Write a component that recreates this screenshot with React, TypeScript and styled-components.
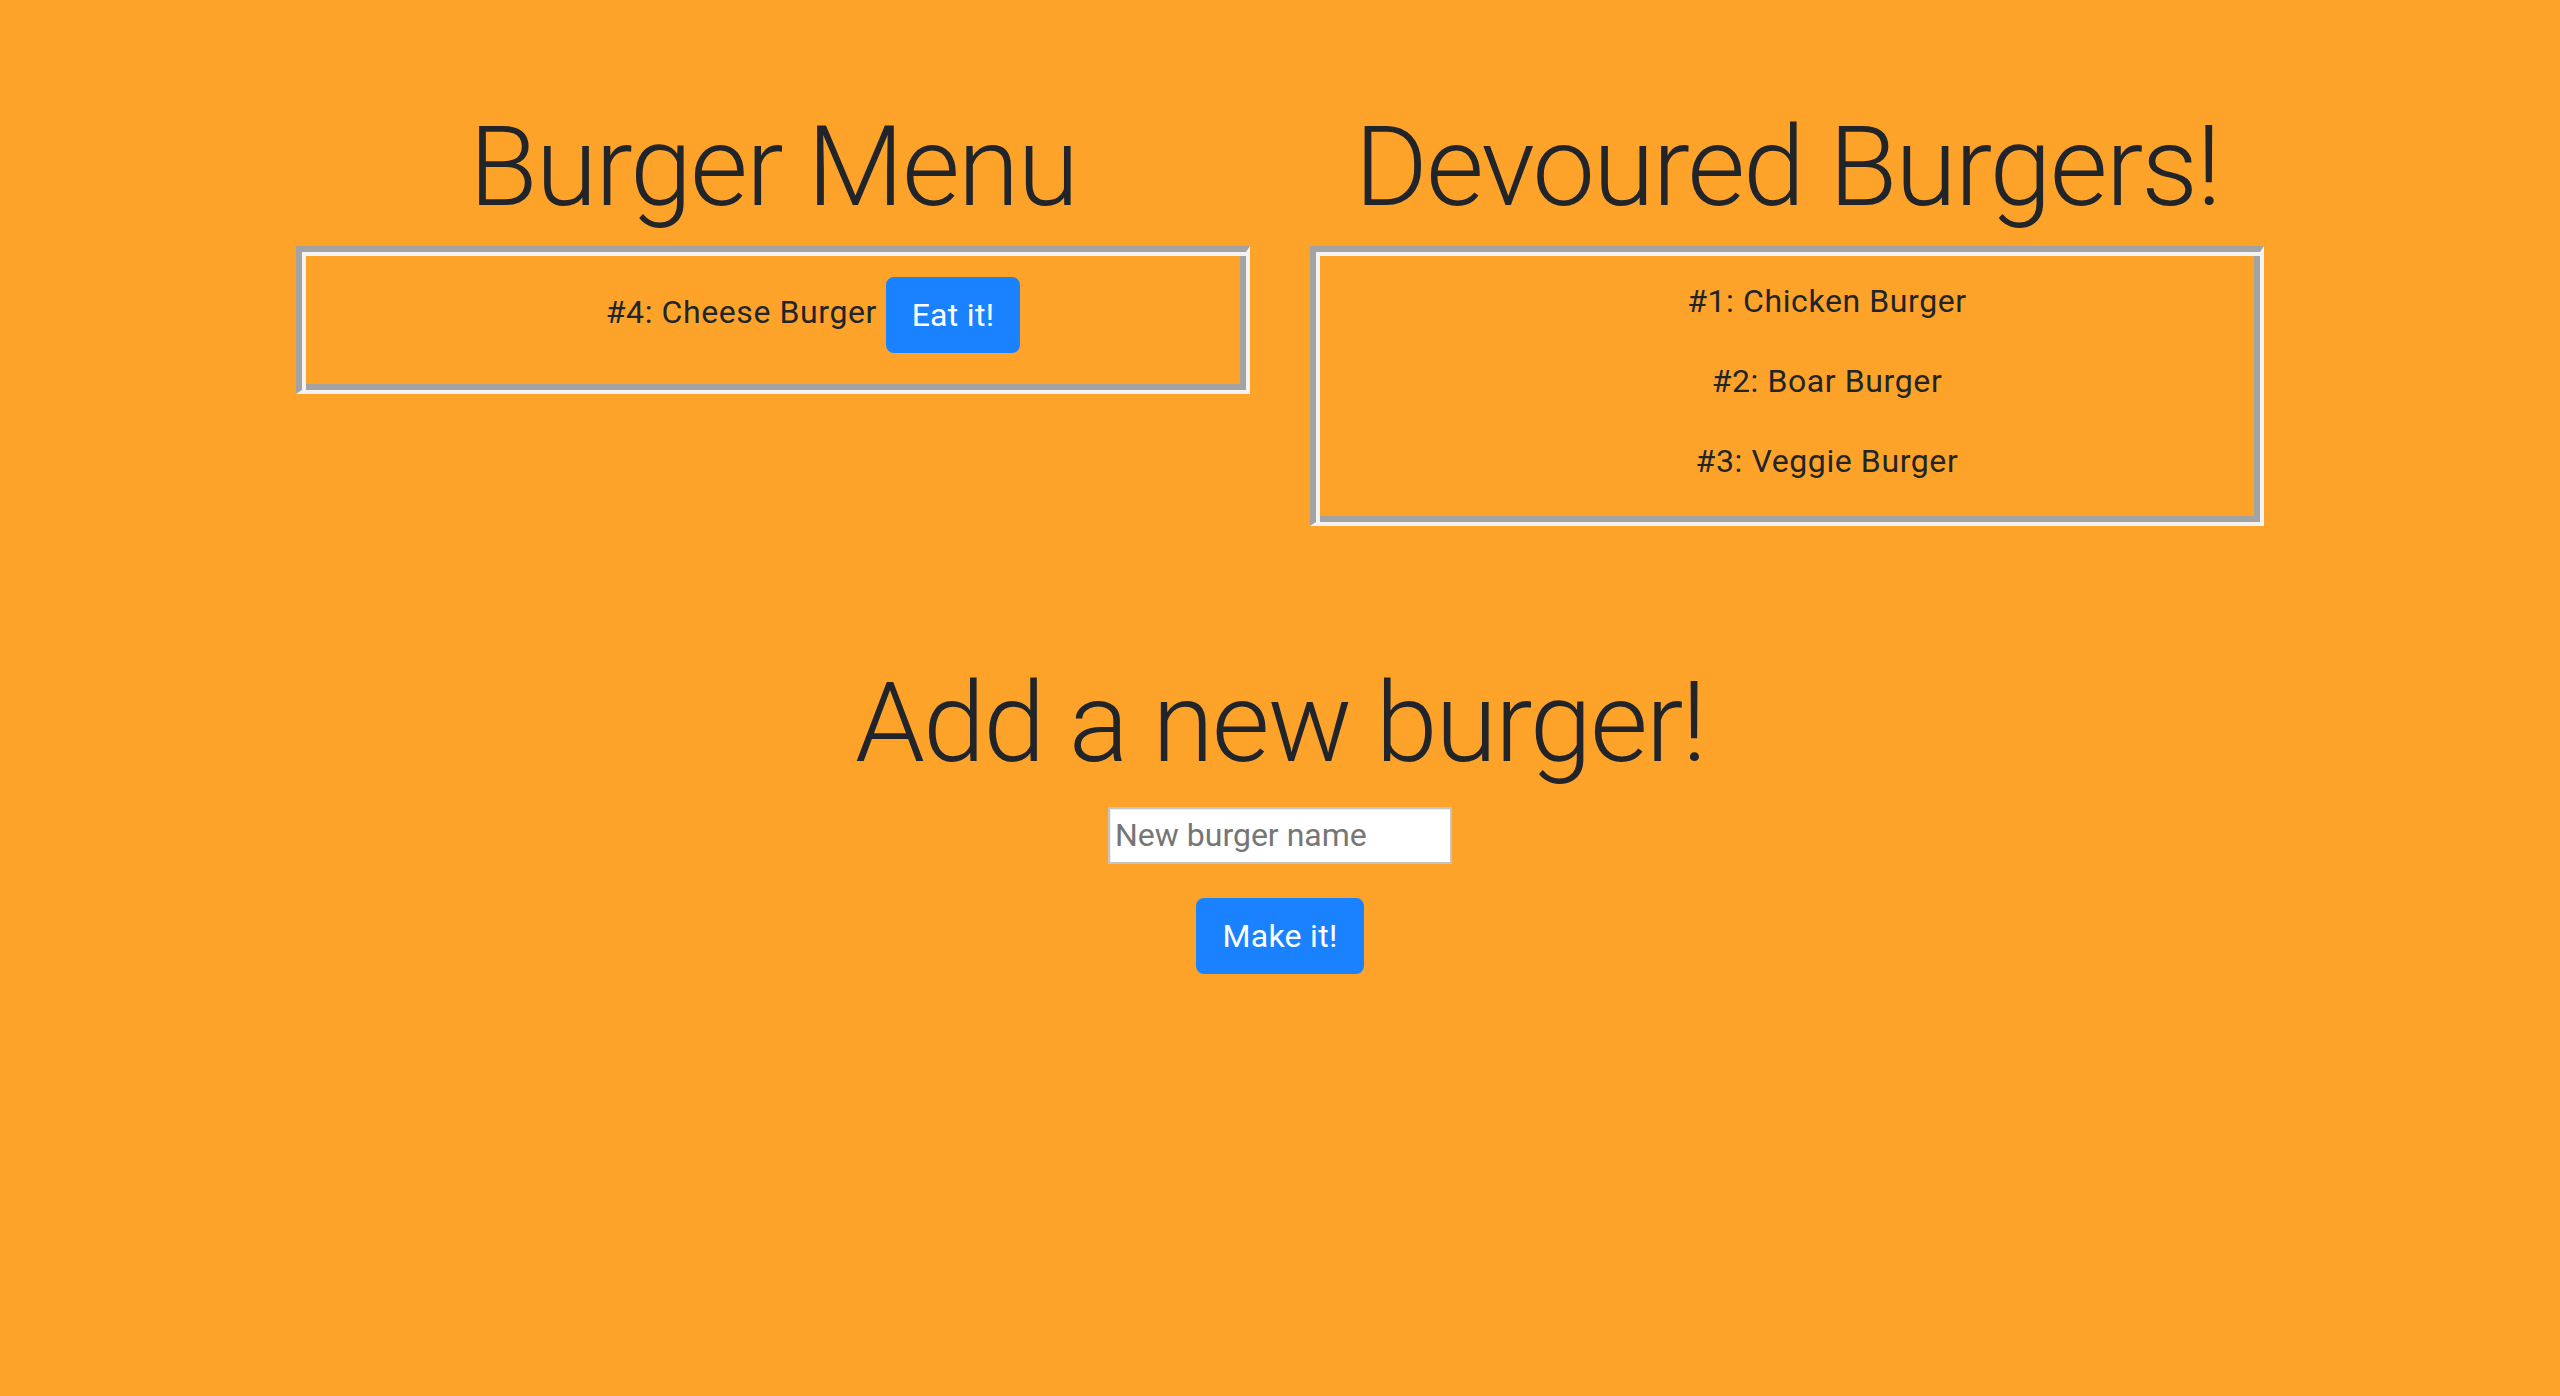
import React from "react";
import styled, { createGlobalStyle } from "styled-components";

const GlobalStyle = createGlobalStyle`
  html, body {
    margin: 0;
    padding: 0;
  }
  body {
    background: #fea32a;
    color: #212529;
    font-family: Roboto, "Noto Sans", "Liberation Sans", sans-serif;
    font-size: 32px;
    line-height: 1.5;
    letter-spacing: 0.6px;
  }
`;

const SPage = styled.div`
  min-height: 100vh;
  padding-top: 100px;
  box-sizing: border-box;
  display: flex;
  flex-direction: column;
  align-items: center;
`;

const SRow = styled.div`
  display: flex;
  justify-content: center;
  align-items: flex-start;
  gap: 60px;
`;

const SPanel = styled.div`
  width: 954px;
  display: flex;
  flex-direction: column;
`;

const SHeading = styled.h1`
  font-size: 112px;
  font-weight: 300;
  line-height: 1.2;
  letter-spacing: -2px;
  margin: 0 0 12px;
  text-align: center;
  white-space: nowrap;
`;

const SBox = styled.ul`
  list-style: none;
  margin: 0;
  border-style: solid;
  border-width: 6px 4px 4px 6px;
  border-color: #a3a3a3 #f3f3f3 #f3f3f3 #a3a3a3;
  box-shadow: inset 4px 4px 0 #f3f3f3, inset -6px -6px 0 #a3a3a3;
  padding: 25px 6px 5px 84px;
  text-align: center;
`;

const SItem = styled.li`
  margin: 0 0 32px;
`;

const SButton = styled.button`
  display: inline-block;
  font-family: inherit;
  font-size: 32px;
  line-height: 48px;
  letter-spacing: 0.3px;
  padding: 12px 24px;
  color: #fff;
  background: #1a82ff;
  border: 2px solid #1a82ff;
  border-radius: 8px;
  vertical-align: middle;
  cursor: pointer;
`;

const SForm = styled.div`
  margin-top: 130px;
  display: flex;
  flex-direction: column;
  align-items: center;
`;

const SInput = styled.input`
  width: 344px;
  height: 57px;
  box-sizing: border-box;
  font-family: inherit;
  font-size: 32px;
  padding: 0 5px;
  color: #212529;
  background: #fff;
  border: 2px solid #c4c4c4;
  box-shadow: inset 1px 1px 0 #ededed;
  outline: none;
  margin-top: 4px;
  margin-bottom: 34px;
  &::placeholder {
    color: #767676;
  }
`;

type Burger = { id: number; name: string };

const menu: Burger[] = [{ id: 4, name: "Cheese Burger" }];
const devoured: Burger[] = [
  { id: 1, name: "Chicken Burger" },
  { id: 2, name: "Boar Burger" },
  { id: 3, name: "Veggie Burger" },
];

const App: React.FC = () => {
  return (
    <>
      <GlobalStyle />
      <SPage>
        <SRow>
          <SPanel>
            <SHeading>Burger Menu</SHeading>
            <SBox>
              {menu.map((b) => (
                <SItem key={b.id}>
                  #{b.id}: {b.name} <SButton>Eat it!</SButton>
                </SItem>
              ))}
            </SBox>
          </SPanel>
          <SPanel>
            <SHeading>Devoured Burgers!</SHeading>
            <SBox>
              {devoured.map((b) => (
                <SItem key={b.id}>
                  #{b.id}: {b.name}
                </SItem>
              ))}
            </SBox>
          </SPanel>
        </SRow>
        <SForm>
          <SHeading>Add a new burger!</SHeading>
          <SInput placeholder="New burger name" />
          <SButton>Make it!</SButton>
        </SForm>
      </SPage>
    </>
  );
};

export default App;
